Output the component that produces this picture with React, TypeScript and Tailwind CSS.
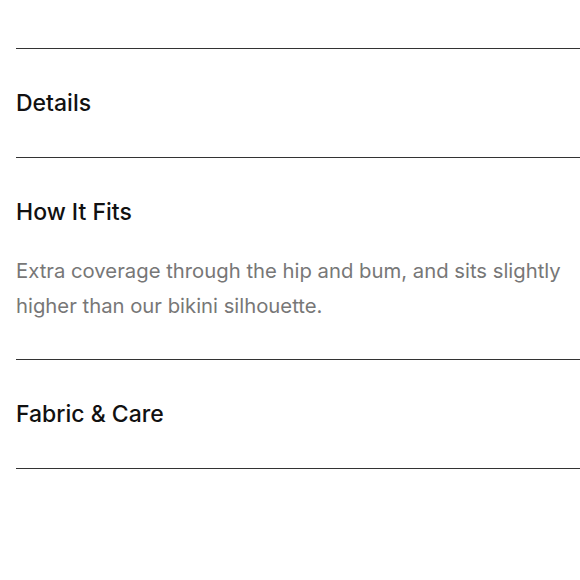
export default function App() {
  const sections = [
    { title: 'Details', body: '' },
    {
      title: 'How It Fits',
      body: 'Extra coverage through the hip and bum, and sits slightly higher than our bikini silhouette.',
    },
    { title: 'Fabric & Care', body: '' },
  ]

  return (
    <div className="h-[580px] w-[580px] overflow-hidden bg-white pl-4 pt-12" style={{ fontFamily: 'Inter, "Noto Sans", sans-serif' }}>
      <div className="w-[600px] border-b-[1.5px] border-[#333]">
        {sections.map((s) => (
          <div key={s.title} className="border-t-[1.5px] border-[#333]">
            <h3 className="py-10 text-[23px] leading-[28px] font-medium text-[#111]">{s.title}</h3>
            {s.body && (
              <p className="-mt-[13px] w-[562px] pb-9 text-[20.3px] leading-[35px] text-[#777]">{s.body}</p>
            )}
          </div>
        ))}
      </div>
    </div>
  )
}
